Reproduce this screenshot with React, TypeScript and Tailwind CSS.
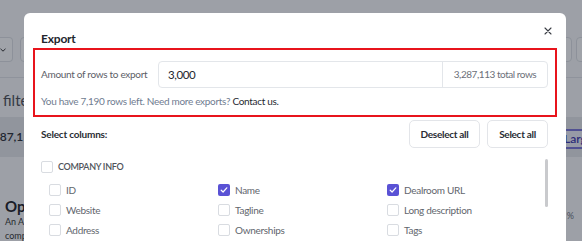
import React from 'react';

interface Column {
  label: string;
  checked?: boolean;
}

const columns: Column[] = [
  { label: 'ID' },
  { label: 'Name', checked: true },
  { label: 'Dealroom URL', checked: true },
  { label: 'Website' },
  { label: 'Tagline' },
  { label: 'Long description' },
  { label: 'Address' },
  { label: 'Ownerships' },
  { label: 'Tags' },
];

const Checkbox: React.FC<{ checked?: boolean }> = ({ checked }) => {
  if (checked) {
    return (
      <span className="flex h-[12px] w-[12px] shrink-0 items-center justify-center rounded-[2px] bg-[#5a52d5]">
        <svg width="8" height="8" viewBox="0 0 8 8" fill="none">
          <path d="M1.2 4.2 3.1 6 6.8 1.8" stroke="white" strokeWidth="1.2" strokeLinecap="round" strokeLinejoin="round" />
        </svg>
      </span>
    );
  }
  return <span className="h-[12px] w-[12px] shrink-0 rounded-[2px] border border-[#d9dce1] bg-white" />;
};

const PageBehind: React.FC = () => {
  return (
    <div className="flex flex-col">
      <div className="h-[37px]" />
      <div className="flex h-[25px] justify-between">
        <div className="flex gap-[7px]">
          <div className="flex h-full w-[13px] items-center rounded-r-[4px] border border-l-0 border-[#dfe2e6] bg-white">
            <svg width="6" height="4" viewBox="0 0 6 4" fill="none">
              <path d="M0.5 0.8 3 3.2 5.5 0.8" stroke="#333" strokeWidth="1" />
            </svg>
          </div>
          <div className="h-full w-[30px] rounded-[4px] border border-[#dfe2e6] bg-white" />
        </div>
        <div className="-mr-[20px] flex gap-[4px]">
          <div className="h-full w-[30px] rounded-[4px] border border-[#dfe2e6] bg-white" />
          <div className="h-full w-[26px] rounded-[4px] border border-[#dfe2e6] bg-white" />
        </div>
      </div>
      <div className="h-[16px] border-b border-[#e3e5e9]" />
      <div className="flex h-[39px] items-center pl-[3px] pt-[5px] text-[15px] text-[#4b4f57]">filters</div>
      <div className="flex h-[40px] items-center justify-between bg-[#e6e8ec]">
        <span className="-ml-[17px] text-[12px] font-semibold text-[#2c2f36]">3,287,113</span>
        <span className="-mr-[20px] mt-[3px] flex h-[20px] w-[40px] items-center border-y-2 border-[#7c77d9] bg-[#f1f0fb] pl-[2px] text-[12px] font-semibold text-[#3f3ab0]">Large</span>
      </div>
      <div className="h-[40px]" />
      <div className="flex justify-between">
        <div className="flex flex-col pl-[5px]">
          <span className="text-[15px] font-bold leading-[18px] text-[#1f2228]">Open</span>
          <span className="text-[9px] leading-[14px] text-[#333]">An AI</span>
          <span className="text-[9px] leading-[14px] text-[#333]">comp</span>
        </div>
        <span className="mr-[8px] mt-[12px] text-[9px] text-[#6b7280]">%</span>
      </div>
    </div>
  );
};

export default function App() {
  return (
    <div className="relative h-[241px] w-[582px] overflow-hidden bg-[#fbfbfc] font-['Lato',sans-serif]">
      <PageBehind />
      <div className="absolute inset-0 bg-[#111827]/40" />

      <div className="absolute left-[24px] top-[13px] h-[260px] w-[542px] rounded-[6px] bg-white pl-[17px] pr-[18px] pt-[18px]">
        <button className="absolute right-[14px] top-[14px] flex h-[8px] w-[8px] items-center justify-center">
          <svg width="8" height="8" viewBox="0 0 8 8" fill="none">
            <path d="M1 1 7 7M7 1 1 7" stroke="#3a3d44" strokeWidth="1.1" strokeLinecap="round" />
          </svg>
        </button>

        <h2 className="text-[12px] font-bold leading-[16px] tracking-[-0.2px] text-[#23262d]">Export</h2>

        <div className="-ml-[8px] -mr-[9px] mt-[1px] border-2 border-[#e8141c] pb-[6px] pl-[6px] pr-[7px] pt-[11px]">
          <div className="flex items-center">
            <span className="w-[117px] shrink-0 whitespace-nowrap text-[10px] tracking-[-0.3px] text-[#5c6067]">
              Amount of rows to export
            </span>
            <div className="flex h-[27px] flex-1 rounded-[4px] border border-[#e3e6ea]">
              <div className="flex flex-1 items-center px-[9px] text-[11.5px] tracking-[-0.4px] text-[#23262d]">3,000</div>
              <div className="flex w-[105px] items-center justify-center whitespace-nowrap border-l border-[#e3e6ea] text-[10px] tracking-[-0.45px] text-[#6b7079]">
                3,287,113 total rows
              </div>
            </div>
          </div>
          <p className="mt-[5px] whitespace-nowrap text-[10px] leading-[16px] tracking-[-0.3px] text-[#6f7c90]">
            You have 7,190 rows left. Need more exports? <span className="text-[#262930]">Contact us.</span>
          </p>
        </div>

        <div className="mt-[3px] flex h-[28px] items-center justify-between">
          <span className="text-[10px] font-bold tracking-[-0.2px] text-[#2a2d34]">Select columns:</span>
          <div className="flex gap-[7px]">
            <button className="h-[28px] w-[71px] rounded-[5px] border border-[#e3e5e9] text-[10px] font-bold tracking-[-0.3px] text-[#2a2d34]">
              Deselect all
            </button>
            <button className="h-[28px] w-[61px] rounded-[5px] border border-[#e3e5e9] text-[10px] font-bold tracking-[-0.3px] text-[#2a2d34]">
              Select all
            </button>
          </div>
        </div>

        <div className="mt-[9px] flex">
          <div className="flex-1">
            <div className="flex h-[20px] items-center gap-[5px]">
              <Checkbox />
              <span className="text-[9px] font-semibold uppercase tracking-[-0.3px] text-[#50545b]">Company info</span>
            </div>
            <div className="mt-[3px] grid grid-cols-[169px_169px_1fr] pl-[8px]">
              {columns.map((col) => (
                <div key={col.label} className="flex h-[20px] items-center gap-[5px]">
                  <Checkbox checked={col.checked} />
                  <span className="whitespace-nowrap text-[10px] tracking-[-0.3px] text-[#62666d]">{col.label}</span>
                </div>
              ))}
            </div>
          </div>
          <div className="mt-[2px] h-[48px] w-[3px] rounded-full bg-[#c9cacd]" />
        </div>
      </div>
    </div>
  );
}
